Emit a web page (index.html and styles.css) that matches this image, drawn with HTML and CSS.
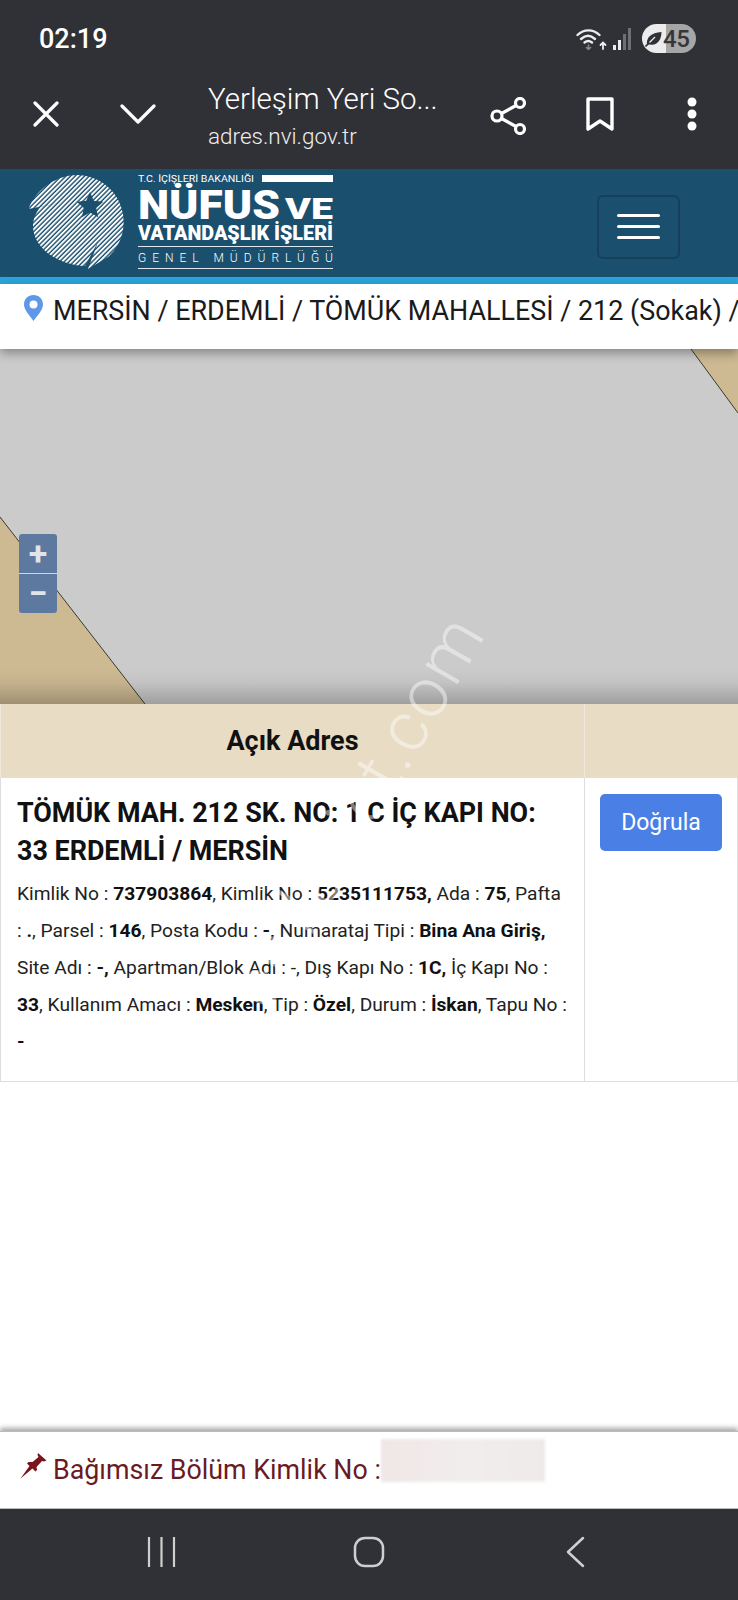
FILE: index.html
```html
<!DOCTYPE html>
<html>
<head>
  <title>Yerleşim Yeri Sorgulama</title>
  <link rel="stylesheet" href="styles.css">
</head>
<body>
  <div class="phone">
    <div class="status-bar">
      <span class="clock">02:19</span>
      <div class="status-icons">
        <svg class="wifi" width="31" height="22" viewBox="0 0 31 22" fill="none" stroke="#ececec" stroke-width="2.400" stroke-linecap="round">
          <path d="M1.500 7C8 .8 17 .8 23.500 7"/>
          <path d="M5 11C9.500 6.800 14.500 6.800 19 11"/>
          <path d="M8.500 14.500C11 12.500 13.500 12.500 16 14.500"/>
          <path d="M12.500 17v4M10.500 19.500l2 2 2-2" stroke="#85858a" stroke-width="1.600"/>
          <path d="M27 21v-6.500M24.500 17l2.500-2.500 2.500 2.500" stroke-width="1.800"/>
        </svg>
        <svg class="signal" width="19" height="22" viewBox="0 0 19 22">
          <rect x="0" y="17" width="3" height="5" fill="#ececec"/>
          <rect x="5" y="12" width="3" height="10" fill="#ececec"/>
          <rect x="10" y="6" width="3" height="16" fill="#6f6f73"/>
          <rect x="15" y="0" width="3" height="22" fill="#6f6f73"/>
        </svg>
        <div class="battery">
          <svg class="leaf" width="17" height="16" viewBox="0 0 17 16">
            <path d="M2 13.500C1 7 6 1.500 16.500 1C16.500 9 12 15 5 13.500Z" fill="#303136"/>
            <path d="M0.500 15.500L10 6" stroke="#303136" stroke-width="1.600"/>
            <path d="M4.500 11.500L10 6" stroke="#ececec" stroke-width="1.300"/>
          </svg>
          <span>45</span>
        </div>
      </div>
    </div>

    <div class="toolbar">
      <svg class="tool-close" width="26" height="26" viewBox="0 0 26 26" stroke="#fff" stroke-width="3.200" stroke-linecap="round">
        <path d="M2 2L24 24M24 2L2 24"/>
      </svg>
      <svg class="tool-down" width="36" height="20" viewBox="0 0 36 20" fill="none" stroke="#fff" stroke-width="3.200" stroke-linecap="round" stroke-linejoin="round">
        <path d="M2 2L18 18L34 2"/>
      </svg>
      <div class="tab-title">
        <div class="tab-name">Yerleşim Yeri So...</div>
        <div class="tab-url">adres.nvi.gov.tr</div>
      </div>
      <svg class="tool-share" width="37" height="38" viewBox="0 0 37 38" fill="none" stroke="#fff" stroke-width="3.200">
        <circle cx="7" cy="19" r="5"/>
        <circle cx="30" cy="6" r="4.500"/>
        <circle cx="30" cy="32" r="4.500"/>
        <path d="M11.500 16.500L26 8.500M11.500 21.500L26 29.500"/>
      </svg>
      <svg class="tool-mark" width="28" height="35" viewBox="0 0 28 35" fill="none" stroke="#fff" stroke-width="3.400" stroke-linejoin="round">
        <path d="M2 2H26V32L14 24L2 32Z"/>
      </svg>
      <svg class="tool-more" width="10" height="34" viewBox="0 0 10 34" fill="#fff">
        <circle cx="5" cy="5" r="4.500"/>
        <circle cx="5" cy="17" r="4.500"/>
        <circle cx="5" cy="29" r="4.500"/>
      </svg>
    </div>

    <div class="site-header">
      <svg class="logo" width="340" height="100" viewBox="0 0 340 100">
        <defs>
          <pattern id="stripes" width="3.300" height="3.300" patternUnits="userSpaceOnUse" patternTransform="rotate(-45)">
            <rect width="3.300" height="1.900" fill="#fff"/>
          </pattern>
          <clipPath id="globe">
            <path d="M0.500 36C6 20 25 2 50 2A47 47 0 0 1 80 84L60 96L70 69L57 93C30 92 5 75 5 53C5 46 8 40 12 34L36 29Z"/>
          </clipPath>
        </defs>
        <rect width="100" height="100" fill="url(#stripes)" clip-path="url(#globe)"/>
        <path d="M62 19L65.800 27.700L75.300 28.700L68.200 35L70.200 44.300L62 39.500L53.800 44.300L55.800 35L48.700 28.700L58.200 27.700Z" fill="#1b4f6e"/>
        <text x="110" y="9" class="logo-small" textLength="116" lengthAdjust="spacingAndGlyphs">T.C. İÇİŞLERİ BAKANLIĞI</text>
        <rect x="234" y="2" width="71" height="7" fill="#fff"/>
        <text x="110" y="46" class="logo-big" textLength="142" lengthAdjust="spacingAndGlyphs">NÜFUS</text>
        <text x="257" y="46" class="logo-ve" textLength="48" lengthAdjust="spacingAndGlyphs">VE</text>
        <text x="110" y="67" class="logo-mid" textLength="195" lengthAdjust="spacingAndGlyphs">VATANDAŞLIK İŞLERİ</text>
        <rect x="110" y="73" width="195" height="1" fill="#dfe8ee"/>
        <text x="110" y="89" class="logo-thin" textLength="195">GENEL MÜDÜRLÜĞÜ</text>
        <rect x="110" y="95" width="195" height="1" fill="#dfe8ee"/>
      </svg>
      <button class="menu-button"><span></span><span></span><span></span></button>
    </div>

    <div class="breadcrumb">
      <svg class="pin" width="19" height="26" viewBox="0 0 19 26">
        <path fill-rule="evenodd" d="M9.500 0C15 0 19 4 19 9.500C19 15 13 21 9.500 26C6 21 0 15 0 9.500C0 4 4 0 9.500 0ZM9.500 5.500A4 4 0 1 0 9.500 13.500A4 4 0 1 0 9.500 5.500Z" fill="#5f98e6"/>
      </svg>
      <span>MERSİN / ERDEMLİ / TÖMÜK MAHALLESİ / 212 (Sokak) /</span>
    </div>

    <div class="map">
      <svg class="map-land" width="738" height="355" viewBox="0 0 738 355">
        <path d="M0 168L145 355H0Z" fill="#cdb992"/>
        <path d="M691 0L738 64V0Z" fill="#cdb992"/>
        <path d="M0 168L145 355M691 0L738 64" fill="none" stroke="#3a3a30" stroke-width="1"/>
      </svg>
      <div class="zoom-control">
        <div class="zoom-btn">+</div>
        <div class="zoom-btn">−</div>
      </div>
    </div>

    <table class="address-table">
      <thead>
        <tr>
          <th class="col-address">Açık Adres</th>
          <th class="col-action"></th>
        </tr>
      </thead>
      <tbody>
        <tr>
          <td class="col-address">
            <div class="address-title">TÖMÜK MAH. 212 SK. NO: 1 C İÇ KAPI NO: 33 ERDEMLİ / MERSİN</div>
            <div class="address-detail">Kimlik No : <b>737903864</b>, Kimlik No : <b>5235111753,</b> Ada : <b>75</b>, Pafta : <b>.</b>, Parsel : <b>146</b>, Posta Kodu : <b>-,</b> Numarataj Tipi : <b>Bina Ana Giriş,</b> Site Adı : <b>-,</b> Apartman/Blok Adı : -, Dış Kapı No : <b>1C,</b> İç Kapı No : <b>33</b>, Kullanım Amacı : <b>Mesken</b>, Tip : <b>Özel</b>, Durum : <b>İskan</b>, Tapu No : <b>-</b></div>
          </td>
          <td class="col-action"><button class="verify-button">Doğrula</button></td>
        </tr>
      </tbody>
    </table>

    <div class="spacer"></div>

    <div class="pinned-bar">
      <svg class="thumbtack" width="28" height="26" viewBox="0 0 28 26">
        <path d="M18 0L26.500 7.500L24 8.500L22 8L16.500 14L17 17L15.500 18.500L12.500 15.500L0.500 25.500L9.500 13L7 10.500L8.500 9L12.500 9L18.500 4L17.500 2Z" fill="#7a141c"/>
      </svg>
      <span class="pinned-label">Bağımsız Bölüm Kimlik No :</span>
      <div class="blurred"></div>
    </div>

    <div class="nav-bar">
      <svg width="29" height="30" viewBox="0 0 29 30" stroke="#cfcfcf" stroke-width="2.200">
        <path d="M2 0V30M14.500 0V30M27 0V30"/>
      </svg>
      <svg class="nav-home" width="32" height="32" viewBox="0 0 32 32" fill="none" stroke="#cfcfcf" stroke-width="2.500">
        <rect x="2" y="2" width="28" height="28" rx="10"/>
      </svg>
      <svg class="nav-back" width="19" height="32" viewBox="0 0 19 32" fill="none" stroke="#cfcfcf" stroke-width="2.500" stroke-linecap="round" stroke-linejoin="round">
        <path d="M17 2L2 16L17 30"/>
      </svg>
    </div>

    <div class="watermark">emlakjet.com</div>
  </div>
</body>
</html>
```

FILE: styles.css
```css
body {
  margin: 0;
  padding: 0;
  background: #fff;
  font-family: Roboto, "Liberation Sans", sans-serif;
}

.phone {
  position: relative;
  width: 738px;
  height: 1600px;
  display: flex;
  flex-direction: column;
  overflow: hidden;
}

.status-bar {
  height: 66px;
  background-color: #303136;
  display: flex;
  justify-content: space-between;
  align-items: center;
  padding: 11px 42px 0 39px;
  box-sizing: border-box;
}

.clock {
  color: #fff;
  font-size: 27px;
  font-weight: 500;
}

.status-icons {
  display: flex;
  align-items: center;
  gap: 6px;
}

.battery {
  width: 54px;
  height: 29px;
  margin-left: 4px;
  border-radius: 15px;
  background: linear-gradient(to right, #ececec 0, #ececec 44%, #a6a6a6 44%);
  display: flex;
  align-items: center;
  gap: 1px;
  padding-left: 3px;
  box-sizing: border-box;
  color: #36363a;
  font-size: 24px;
  font-weight: 500;
  letter-spacing: -0.5px;
}

.toolbar {
  height: 103px;
  background-color: #303136;
  display: flex;
  align-items: center;
  box-sizing: border-box;
  padding-bottom: 8px;
}

.tool-close { margin-left: 33px; }
.tool-down { margin-left: 61px; }

.tab-title {
  width: 260px;
  margin-left: 52px;
  margin-right: 22px;
  padding-top: 7px;
  color: #fff;
}

.tab-name {
  font-size: 29.500px;
  line-height: 38px;
  font-weight: 300;
}

.tab-url {
  font-size: 22.500px;
  line-height: 37px;
  color: #eee;
  font-weight: 300;
}

.tool-share { margin-top: 4px; }
.tool-mark { margin-left: 59px; margin-top: 1px; }
.tool-more { margin-left: 73px; margin-top: 1px; }

.site-header {
  height: 108px;
  background-color: #1b4f6e;
  border-bottom: 7px solid #2ba5dc;
  display: flex;
  justify-content: space-between;
  align-items: center;
  padding: 0 58px 0 28px;
}

.logo {
  fill: #fff;
}

.logo-small {
  font-family: Roboto, sans-serif;
  font-size: 9px;
}

.logo-big {
  font-family: Roboto, sans-serif;
  font-size: 41px;
  font-weight: 900;
}

.logo-ve {
  font-family: Roboto, sans-serif;
  font-size: 30px;
  font-weight: 900;
}

.logo-mid {
  font-family: Roboto, sans-serif;
  font-size: 21px;
  font-weight: 900;
}

.logo-thin {
  font-family: Roboto, sans-serif;
  font-size: 12px;
  font-weight: 300;
}

.menu-button {
  width: 83px;
  height: 64px;
  margin-top: 7px;
  background: transparent;
  border: 2px solid #16405a;
  border-radius: 6px;
  display: flex;
  flex-direction: column;
  align-items: center;
  justify-content: center;
  gap: 8px;
  padding: 0;
}

.menu-button span {
  width: 43px;
  height: 3px;
  border-radius: 2px;
  background-color: #fff;
}

.breadcrumb {
  height: 65px;
  background: #fff;
  display: flex;
  align-items: flex-start;
  padding: 11px 0 0 24px;
  box-sizing: border-box;
  white-space: nowrap;
  font-size: 26.900px;
  line-height: 32px;
  color: #1a1a1a;
  box-shadow: 0 4px 10px rgba(0, 0, 0, 0.35);
  z-index: 2;
}

.pin {
  margin-right: 10px;
  flex-shrink: 0;
}

.map {
  position: relative;
  height: 355px;
  background-color: #cbcbcb;
}

.map::after {
  content: "";
  position: absolute;
  left: 0;
  right: 0;
  bottom: 0;
  height: 36px;
  background: linear-gradient(to bottom, rgba(0, 0, 0, 0), rgba(0, 0, 0, 0.04) 40%, rgba(0, 0, 0, 0.22));
}

.map-land {
  position: absolute;
  left: 0;
  top: 0;
}

.zoom-control {
  position: absolute;
  left: 19px;
  top: 185px;
  width: 38px;
  border-radius: 3px;
  overflow: hidden;
  background-color: #5e799f;
}

.zoom-btn {
  height: 39px;
  color: #dfe3ea;
  font-size: 34px;
  font-weight: 700;
  line-height: 38px;
  text-align: center;
}

.zoom-btn + .zoom-btn {
  border-top: 1.500px solid #cfd6e0;
}

.address-table {
  width: 738px;
  table-layout: fixed;
  border-collapse: collapse;
}

.address-table th {
  height: 73px;
  padding: 1px 0 0;
  box-sizing: border-box;
  background-color: #e8dcc5;
  color: #111;
  font-size: 27px;
  font-weight: 700;
  text-align: center;
  border-left: 1px solid #efe9dc;
}

.address-table td {
  vertical-align: top;
  border: 1px solid #dedede;
}

.col-action {
  width: 153px;
}

td.col-address {
  padding: 16px 17px 21px 16px;
}

td.col-action {
  padding: 16px 15px;
}

.address-title {
  font-size: 26.900px;
  font-weight: 700;
  line-height: 38px;
  color: #111;
}

.address-detail {
  margin-top: 5px;
  font-size: 19.200px;
  line-height: 37px;
  color: #222;
}

.address-detail b {
  color: #111;
}

.verify-button {
  width: 122px;
  height: 57px;
  padding: 0;
  border: none;
  border-radius: 5px;
  background-color: #4a80e6;
  color: #fff;
  font-family: Roboto, sans-serif;
  font-size: 23px;
}

.spacer {
  flex-grow: 1;
}

.pinned-bar {
  height: 77px;
  display: flex;
  align-items: flex-start;
  padding: 7px 0 0 20px;
  box-sizing: border-box;
  background: #fff;
  box-shadow: 0 -3px 5px rgba(0, 0, 0, 0.35);
  border-top: 1px solid #bbb;
  font-size: 26.800px;
  color: #6b1a1f;
}

.thumbtack {
  margin-top: 14px;
  margin-right: 5px;
}

.pinned-label {
  margin-top: 15px;
}

.blurred {
  width: 164px;
  height: 43px;
  background: linear-gradient(to right, #f0e6e6, #f1eded 50%, #efeaea);
  filter: blur(1.500px);
}

.nav-bar {
  height: 92px;
  background-color: #303136;
  border-top: 1px solid #bcbcbc;
  box-sizing: border-box;
  display: flex;
  align-items: center;
  padding: 0 0 6px 147px;
}

.nav-home { margin-left: 177px; }
.nav-back { margin-left: 181px; }

.watermark {
  position: absolute;
  left: 142px;
  top: 784px;
  width: 420px;
  color: rgba(255, 255, 255, 0.45);
  font-size: 70px;
  font-weight: 300;
  line-height: 70px;
  letter-spacing: 2px;
  text-align: center;
  white-space: nowrap;
  transform: rotate(-60deg);
}
```
